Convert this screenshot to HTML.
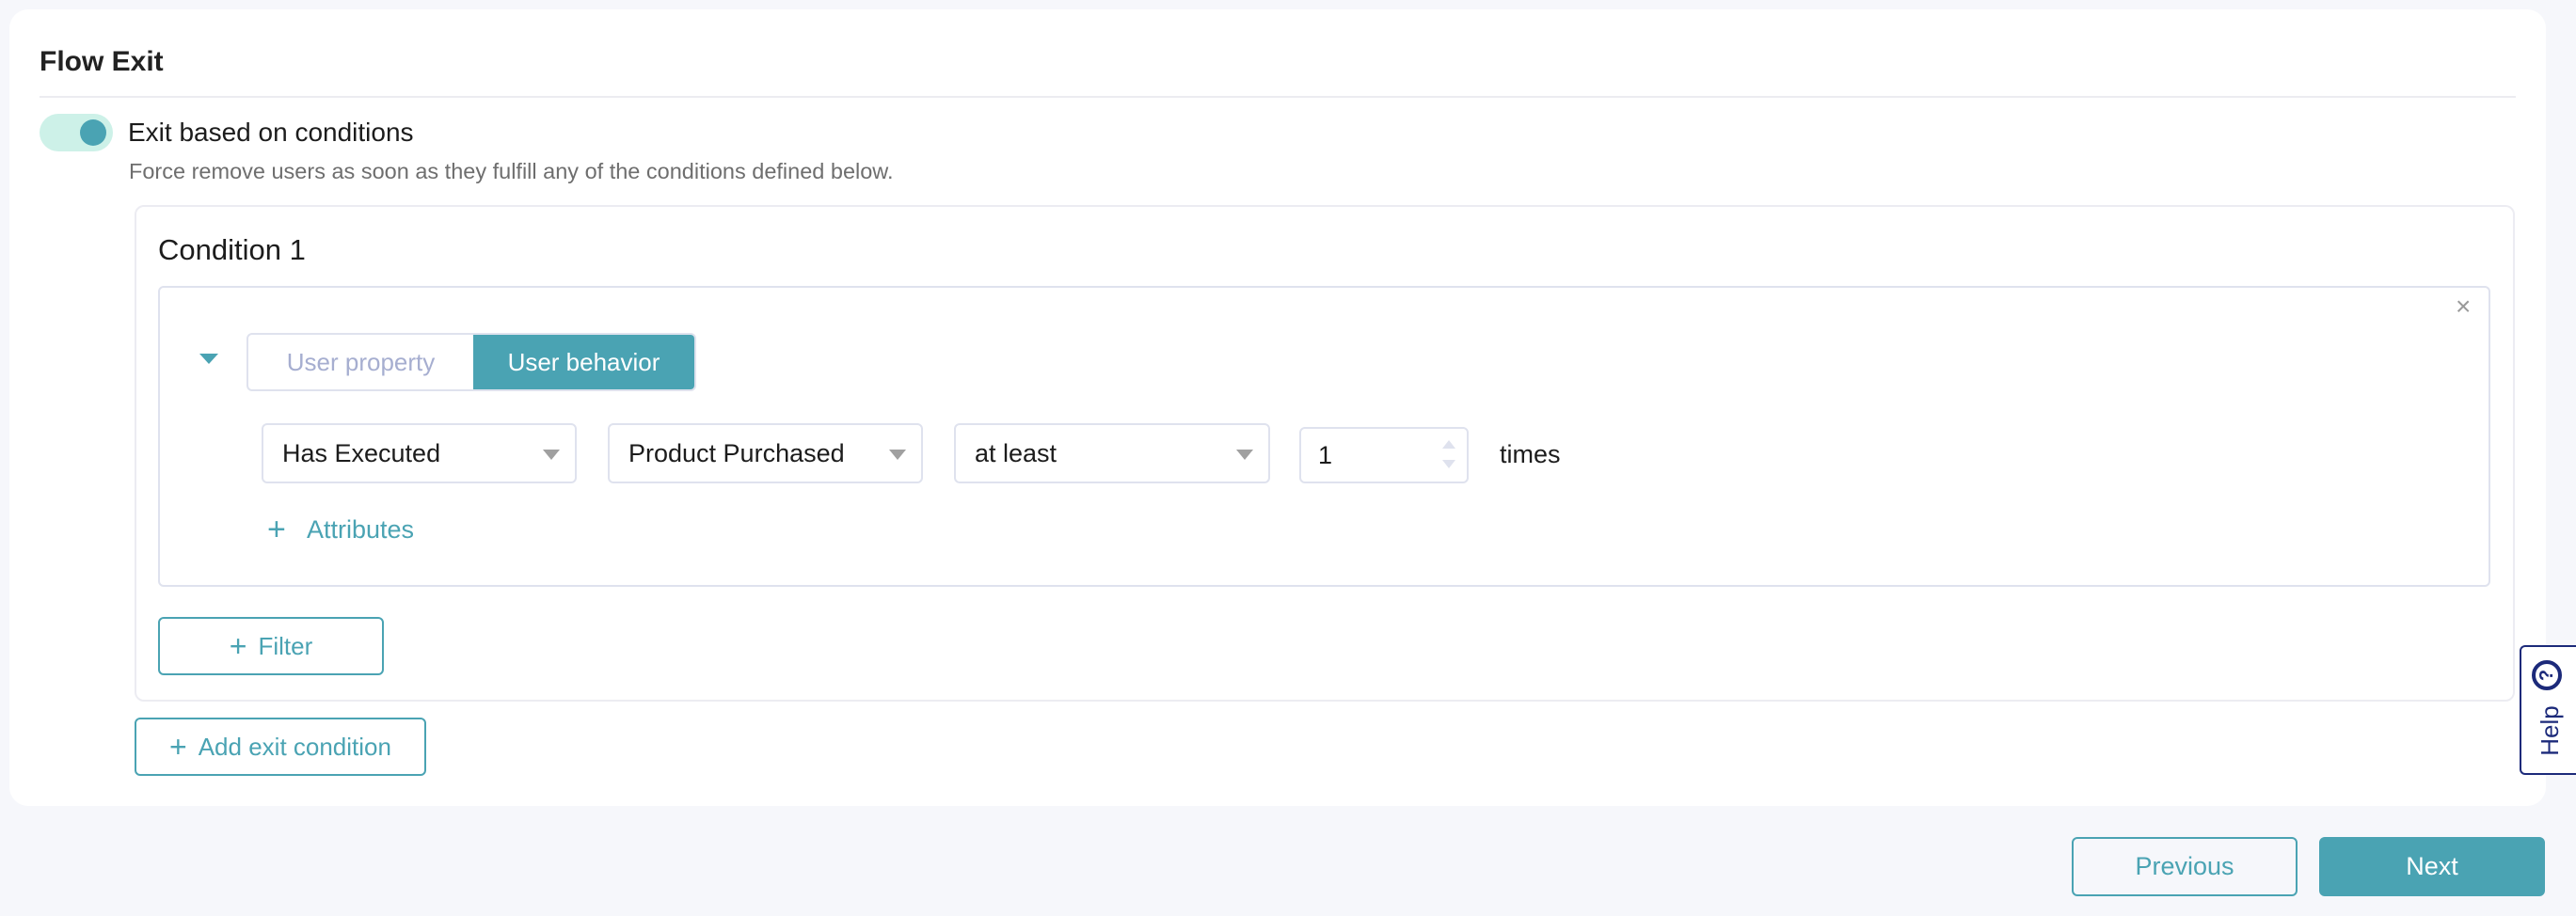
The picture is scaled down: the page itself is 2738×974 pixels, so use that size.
<!DOCTYPE html>
<html><head><meta charset="utf-8"><style>
*{box-sizing:border-box;margin:0;padding:0}
body{width:2738px;height:974px;background:#f6f7fb;font-family:"Liberation Sans",sans-serif;position:relative;overflow:hidden;color:#1c1c1c}
.a{position:absolute}
.card{left:10px;top:10px;width:2696px;height:847px;background:#fff;border-radius:20px}
.t{white-space:nowrap;line-height:1}
.sel{position:absolute;height:64px;border:2px solid #dfe2ee;border-radius:6px;background:#fff;font-size:27px;padding-left:20px;display:flex;align-items:center}
.dd:after{content:"";position:absolute;right:16px;top:26px;border-left:9px solid transparent;border-right:9px solid transparent;border-top:11px solid #a0a0a0}
.btn{border:2px solid #4aa3b3;border-radius:6px;color:#4aa3b3;font-size:26px;display:flex;align-items:center;justify-content:center}
</style></head><body>
<div class="a card"></div>
<div class="a t" style="left:42px;top:51px;font-size:30px;font-weight:bold;color:#222">Flow Exit</div>
<div class="a" style="left:42px;top:102px;width:2632px;height:2px;background:#ececf1"></div>
<div class="a" style="left:42px;top:121px;width:78px;height:40px;border-radius:20px;background:#cdf1e8"></div>
<div class="a" style="left:85px;top:127px;width:28px;height:28px;border-radius:50%;background:#4aa3b3"></div>
<div class="a t" style="left:136px;top:127px;font-size:28px">Exit based on conditions</div>
<div class="a t" style="left:137px;top:171px;font-size:23.5px;color:#6e6e6e">Force remove users as soon as they fulfill any of the conditions defined below.</div>
<div class="a" style="left:143px;top:218px;width:2530px;height:528px;border:2px solid #ececf2;border-radius:10px"></div>
<div class="a t" style="left:168px;top:250px;font-size:31px">Condition 1</div>
<div class="a" style="left:168px;top:304px;width:2479px;height:320px;border:2px solid #dfe2ee;border-radius:6px"></div>
<div class="a t" style="left:2610px;top:312px;font-size:28px;color:#9a9a9a">×</div>
<div class="a" style="left:212px;top:376px;border-left:10px solid transparent;border-right:10px solid transparent;border-top:11px solid #4aa3b3"></div>
<div class="a" style="left:262px;top:354px;width:478px;height:62px;border:2px solid #dfe2ee;border-radius:6px;overflow:hidden;display:flex">
<div style="width:239px;display:flex;align-items:center;justify-content:center;font-size:26px;color:#a6aed0">User property</div>
<div style="flex:1;background:#4aa3b3;display:flex;align-items:center;justify-content:center;font-size:26px;color:#fff">User behavior</div></div>
<div class="sel dd" style="left:278px;top:450px;width:335px">Has Executed</div>
<div class="sel dd" style="left:646px;top:450px;width:335px">Product Purchased</div>
<div class="sel dd" style="left:1014px;top:450px;width:336px">at least</div>
<div class="sel" style="left:1381px;top:454px;width:180px;height:60px;padding-left:18px">1
<div class="a" style="right:12px;top:12px;border-left:7px solid transparent;border-right:7px solid transparent;border-bottom:9px solid #dfe2ee"></div>
<div class="a" style="right:12px;top:33px;border-left:7px solid transparent;border-right:7px solid transparent;border-top:9px solid #dfe2ee"></div></div>
<div class="a t" style="left:1594px;top:470px;font-size:27px">times</div>
<div class="a t" style="left:284px;top:546px;font-size:34px;color:#4aa3b3">+</div>
<div class="a t" style="left:326px;top:550px;font-size:27px;color:#4aa3b3">Attributes</div>
<div class="a btn" style="left:168px;top:656px;width:240px;height:62px"><span style="font-size:32px;margin-right:12px">+</span>Filter</div>
<div class="a btn" style="left:143px;top:763px;width:310px;height:62px"><span style="font-size:32px;margin-right:12px">+</span>Add exit condition</div>
<div class="a" style="left:2678px;top:686px;width:62px;height:138px;border:2px solid #1c2a7a;border-right:none;border-radius:6px 0 0 6px;background:#fff"></div>
<div class="a t" style="left:2680px;top:764px;transform:rotate(-90deg);transform-origin:center;width:60px;text-align:center;font-size:26px;color:#1c2a7a">Help</div>
<div class="a" style="left:2691px;top:702px;width:32px;height:32px;border:4px solid #1c2a7a;border-radius:50%;color:#1c2a7a;font-size:20px;font-weight:bold;display:flex;align-items:center;justify-content:center;transform:rotate(-90deg)">?</div>
<div class="a btn" style="left:2202px;top:890px;width:240px;height:63px;font-size:27px">Previous</div>
<div class="a btn" style="left:2465px;top:890px;width:240px;height:63px;font-size:27px;background:#4aa3b3;color:#fff">Next</div>
</body></html>
